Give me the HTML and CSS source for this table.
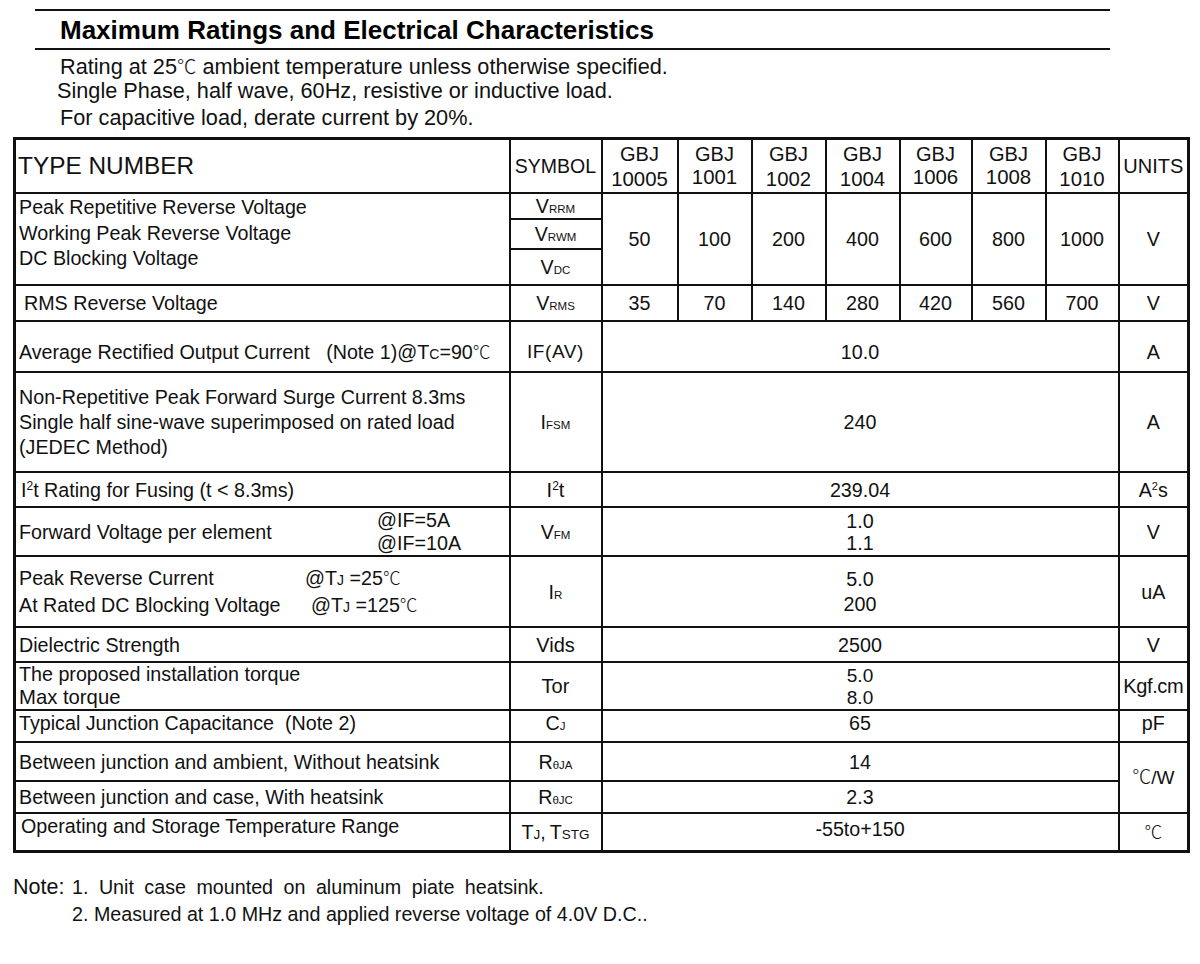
FILE: index.html
```html
<!DOCTYPE html>
<html lang="en">
<head>
<meta charset="utf-8">
<title>Maximum Ratings and Electrical Characteristics</title>
<link rel="stylesheet" href="styles.css">
</head>
<body>
<div class="page">
  <h1 class="title">Maximum Ratings and Electrical Characteristics</h1>
  <div class="intro">
    <p class="l1">Rating at 25<span class="deg">℃</span> ambient temperature unless otherwise specified.</p>
    <p class="l2">Single Phase, half wave, 60Hz, resistive or inductive load.</p>
    <p class="l3">For capacitive load, derate current by 20%.</p>
  </div>

  <table class="spec">
    <colgroup>
      <col class="c-desc"><col class="c-sym">
      <col class="c-v1"><col class="c-v2"><col class="c-v3"><col class="c-v4"><col class="c-v5"><col class="c-v6"><col class="c-v7">
      <col class="c-unit">
    </colgroup>
    <tr class="r-head">
      <td class="desc typenum">TYPE NUMBER</td>
      <td class="sym symhead">SYMBOL</td>
      <td class="gbj">GBJ<br><span class="pn d1">10005</span></td>
      <td class="gbj">GBJ<br><span class="pn">1001</span></td>
      <td class="gbj">GBJ<br><span class="pn d1">1002</span></td>
      <td class="gbj">GBJ<br><span class="pn d1">1004</span></td>
      <td class="gbj">GBJ<br><span class="pn">1006</span></td>
      <td class="gbj">GBJ<br><span class="pn">1008</span></td>
      <td class="gbj">GBJ<br><span class="pn d1">1010</span></td>
      <td class="unit unithead">UNITS</td>
    </tr>
    <tr class="r-vrrm">
      <td class="desc top" rowspan="3">Peak Repetitive Reverse Voltage<br>Working Peak Reverse Voltage<br>DC Blocking Voltage</td>
      <td class="sym">V<span class="sb">RRM</span></td>
      <td class="val" rowspan="3">50</td>
      <td class="val" rowspan="3">100</td>
      <td class="val" rowspan="3">200</td>
      <td class="val" rowspan="3">400</td>
      <td class="val" rowspan="3">600</td>
      <td class="val" rowspan="3">800</td>
      <td class="val" rowspan="3">1000</td>
      <td class="unit" rowspan="3">V</td>
    </tr>
    <tr class="r-vrwm">
      <td class="sym">V<span class="sb">RWM</span></td>
    </tr>
    <tr class="r-vdc">
      <td class="sym">V<span class="sb">DC</span></td>
    </tr>
    <tr class="r-rms">
      <td class="desc ind-rms">RMS Reverse Voltage</td>
      <td class="sym">V<span class="sb">RMS</span></td>
      <td class="val">35</td>
      <td class="val">70</td>
      <td class="val">140</td>
      <td class="val">280</td>
      <td class="val">420</td>
      <td class="val">560</td>
      <td class="val">700</td>
      <td class="unit">V</td>
    </tr>
    <tr class="r-ifav">
      <td class="desc">Average Rectified Output Current &nbsp; (Note 1)@T<span class="sb2">C</span>=90<span class="deg">℃</span></td>
      <td class="sym ifav">IF(AV)</td>
      <td class="val" colspan="7">10.0</td>
      <td class="unit">A</td>
    </tr>
    <tr class="r-ifsm">
      <td class="desc">Non-Repetitive Peak Forward Surge Current 8.3ms<br>Single half sine-wave superimposed on rated load<br>(JEDEC Method)</td>
      <td class="sym">I<span class="sb">FSM</span></td>
      <td class="val" colspan="7">240</td>
      <td class="unit">A</td>
    </tr>
    <tr class="r-i2t">
      <td class="desc ind-i2t">I<sup class="sq">2</sup>t Rating for Fusing (t &lt; 8.3ms)</td>
      <td class="sym big">I<sup class="sq">2</sup>t</td>
      <td class="val" colspan="7">239.04</td>
      <td class="unit">A<sup class="sq2">2</sup>s</td>
    </tr>
    <tr class="r-vfm">
      <td class="desc">
        <div class="split">
          <span class="lbl">Forward Voltage per element</span>
          <span class="cond">@IF=5A<br>@IF=10A</span>
        </div>
      </td>
      <td class="sym">V<span class="sb">FM</span></td>
      <td class="val" colspan="7">1.0<br>1.1</td>
      <td class="unit">V</td>
    </tr>
    <tr class="r-ir">
      <td class="desc">
        <span class="ir1">Peak Reverse Current</span>@T<span class="sb2">J</span> =25<span class="deg">℃</span><br>
        <span class="ir2">At Rated DC Blocking Voltage</span>@T<span class="sb2">J</span> =125<span class="deg">℃</span>
      </td>
      <td class="sym">I<span class="sb">R</span></td>
      <td class="val" colspan="7">5.0<br>200</td>
      <td class="unit">uA</td>
    </tr>
    <tr class="r-vids">
      <td class="desc">Dielectric Strength</td>
      <td class="sym big">Vids</td>
      <td class="val" colspan="7">2500</td>
      <td class="unit">V</td>
    </tr>
    <tr class="r-tor">
      <td class="desc tor-desc">The proposed installation torque<br><span class="maxt">Max torque</span></td>
      <td class="sym big">Tor</td>
      <td class="val tor-val" colspan="7">5.0<br>8.0</td>
      <td class="unit kgf">Kgf.cm</td>
    </tr>
    <tr class="r-cj">
      <td class="desc">Typical Junction Capacitance &nbsp;(Note 2)</td>
      <td class="sym">C<span class="sb">J</span></td>
      <td class="val" colspan="7">65</td>
      <td class="unit">pF</td>
    </tr>
    <tr class="r-rja">
      <td class="desc">Between junction and ambient, Without heatsink</td>
      <td class="sym">R<span class="sb">θJA</span></td>
      <td class="val" colspan="7">14</td>
      <td class="unit cw" rowspan="2"><span class="deg">℃</span>/W</td>
    </tr>
    <tr class="r-rjc">
      <td class="desc">Between junction and case, With heatsink</td>
      <td class="sym">R<span class="sb">θJC</span></td>
      <td class="val" colspan="7">2.3</td>
    </tr>
    <tr class="r-tj">
      <td class="desc ind-tj">Operating and Storage Temperature Range</td>
      <td class="sym">T<span class="sb tsub">J</span>,&thinsp;T<span class="sb tsub">STG</span></td>
      <td class="val" colspan="7">-55to+150</td>
      <td class="unit"><span class="deg">℃</span></td>
    </tr>
  </table>

  <div class="notes">
    <span class="note-label">Note:</span>
    <div class="note-items">
      <p class="n1">1. Unit case mounted on aluminum piate heatsink.</p>
      <p class="n2">2. Measured at 1.0 MHz and applied reverse voltage of 4.0V D.C..</p>
    </div>
  </div>
</div>
</body>
</html>
```

FILE: styles.css
```css
html, body {
  margin: 0;
  padding: 0;
  background: #fff;
}

body {
  font-family: "Liberation Sans", Arial, sans-serif;
  color: #111;
}

.page {
  width: 1200px;
  padding-top: 9px;
}

/* heading */
.title {
  margin: 0 0 0 35px;
  width: 1050px;
  padding-left: 25px;
  height: 37px;
  line-height: 38px;
  border-top: 2px solid #111;
  border-bottom: 2px solid #111;
  font-size: 26px;
  font-weight: bold;
  color: #000;
}

.intro {
  margin-top: 5px;
  padding-left: 60px;
  font-size: 21.7px;
}

.intro p {
  margin: 0;
  line-height: 24px;
}

.intro .l2 {
  margin-left: -3px;
}

.intro .l3 {
  margin-top: 3px;
}

.deg {
  font-family: "Noto Sans CJK SC", "DejaVu Sans", sans-serif;
  font-weight: 300;
  font-size: 0.9em;
  line-height: 1;
}

/* table */
.spec {
  margin: 7px 0 0 13px;
  width: 1175px;
  border-collapse: collapse;
  table-layout: fixed;
  font-size: 19.7px;
  border: 3px solid #111;
}

.spec td {
  border: 2px solid #111;
  padding: 0;
  vertical-align: middle;
  line-height: 24px;
}

.c-desc { width: 495px; }
.c-sym { width: 92px; }
.c-v1 { width: 76px; }
.c-v2 { width: 74px; }
.c-v3 { width: 74px; }
.c-v4 { width: 74px; }
.c-v5 { width: 72px; }
.c-v6 { width: 74px; }
.c-v7 { width: 73px; }
.c-unit { width: 70px; }

.spec td.desc {
  text-align: left;
  padding-left: 3px;
}

.spec td.desc.top {
  vertical-align: top;
  line-height: 25.5px;
  padding-top: 1px;
}

.spec td.ind-rms { padding-left: 8px; }
.spec td.ind-i2t { padding-left: 5px; }
.spec td.ind-tj { padding-left: 5px; }

.sym, .val, .unit, .gbj {
  text-align: center;
}

.sb {
  font-size: 11.5px;
  line-height: 1;
}

.sb.tsub {
  font-size: 13.5px;
}

.sb2 {
  font-size: 14px;
  line-height: 1;
}

.sq {
  font-size: 12px;
  vertical-align: 7px;
  line-height: 0;
}

.sq2 {
  font-size: 11px;
  vertical-align: 7px;
  line-height: 0;
}

.ifav {
  font-size: 19px;
  letter-spacing: 0.6px;
}

.big {
  font-size: 20px;
}

.spec td.typenum {
  font-size: 24.4px;
  padding-left: 2px;
}

.symhead {
  font-size: 19.5px;
}

.spec td.gbj {
  font-size: 20px;
  line-height: 23px;
}

.gbj .pn {
  display: inline-block;
  font-size: 20.4px;
}

.gbj .pn.d1 {
  position: relative;
  top: 2px;
}

.unithead {
  font-size: 20px;
}

.split {
  display: flex;
  align-items: center;
}

.split .lbl {
  width: 358px;
}

.split .cond {
  line-height: 23px;
}

.ir1 {
  display: inline-block;
  width: 286px;
}

.ir2 {
  display: inline-block;
  width: 292px;
}

.r-vfm .val {
  line-height: 22px;
}

.r-ir .desc {
  line-height: 27px;
}

.r-ir .val {
  line-height: 25px;
}

.r-ifsm .desc {
  line-height: 25px;
}

.spec td.tor-desc {
  line-height: 23px;
}

.spec td.tor-val {
  font-size: 19px;
  line-height: 22px;
  vertical-align: top;
  padding-top: 2px;
}

.maxt {
  font-size: 20.3px;
}

.kgf {
  font-size: 20px;
  letter-spacing: -0.4px;
}

.cw {
  font-size: 19px;
}

.cw .deg {
  font-size: 1em;
}

/* row heights: pitch minus borders minus padding */
.r-head td { height: 52px; }
.r-vrrm td { height: 24px; }
.r-vrwm td { height: 28px; }
.r-vdc td { height: 34px; }
.r-rms td { height: 34px; }
.spec .r-ifav td { height: 39px; padding-top: 10px; }
.r-ifsm td { height: 98px; }
.r-i2t td { height: 33px; }
.r-vfm td { height: 47px; }
.r-ir td { height: 69px; }
.r-vids td { height: 33px; }
.r-tor td { height: 46px; }
.spec .r-tor td.tor-val { height: 44px; }
.spec .r-cj td { height: 30px; vertical-align: top; }
.r-rja td { height: 37px; }
.r-rjc td { height: 30px; }
.r-tj td { height: 36px; }

.spec .r-tj .desc {
  vertical-align: top;
}

.spec .r-tj .val {
  vertical-align: top;
  line-height: 31px;
}

/* notes */
.notes {
  display: flex;
  align-items: baseline;
  margin: 21px 0 0 13px;
}

.note-label {
  width: 59px;
  font-size: 21.5px;
}

.note-items p {
  margin: 0;
  font-size: 19.7px;
  line-height: 27px;
}

.note-items .n1 {
  word-spacing: 5px;
}
```
